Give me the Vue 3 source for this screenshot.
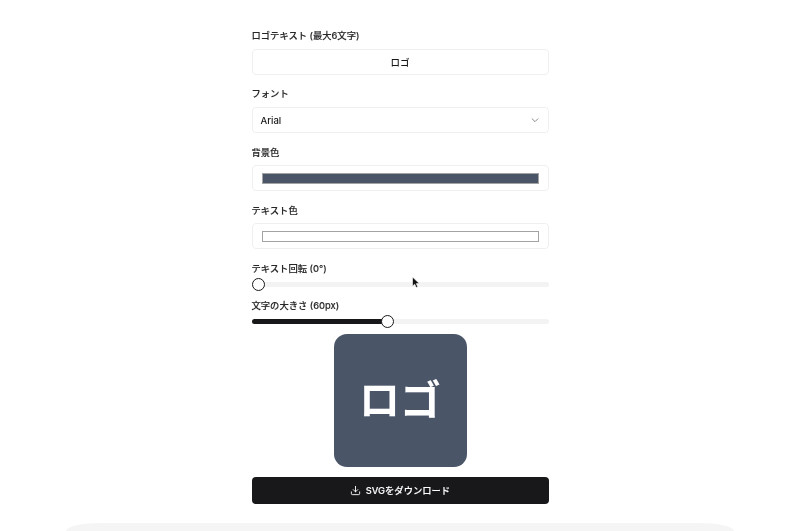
<script setup>
import { ref, computed } from "vue";

const logoText = ref("ロゴ");
const bgColor = "#4a5568";
const rotation = ref(0);
const fontSize = ref(60);

// thumb position on the track, range is about 10-120px
const sizeThumb = computed(() => `${fontSize.value * 0.763}%`);
</script>

<template>
  <div class="page">
    <main class="panel">
      <div class="field">
        <label>ロゴテキスト (最大6文字)</label>
        <div class="box text-box">{{ logoText }}</div>
      </div>
      <div class="field">
        <label>フォント</label>
        <div class="box select-box">
          <span>Arial</span>
          <svg width="10" height="10" viewBox="0 0 24 24" fill="none" stroke="#8a8a8a" stroke-width="2.4" stroke-linecap="round" stroke-linejoin="round">
            <path d="m5 9 7 7 7-7" />
          </svg>
        </div>
      </div>
      <div class="field">
        <label>背景色</label>
        <div class="box color-box">
          <div class="swatch" :style="{ background: bgColor }"></div>
        </div>
      </div>
      <div class="field">
        <label>テキスト色</label>
        <div class="box color-box">
          <div class="swatch" style="background: #ffffff"></div>
        </div>
      </div>
      <div class="slider-field">
        <label>テキスト回転 ({{ rotation }}°)</label>
        <div class="slider">
          <div class="track"></div>
          <div class="thumb thumb-start"></div>
          <svg class="cursor" width="10" height="13" viewBox="0 0 10 13">
            <path d="M1.5 1v9.2l2.2-2 1.5 3.4 1.6-.7-1.5-3.3h3z" fill="#111" stroke="#fff" stroke-width=".6" />
          </svg>
        </div>
      </div>
      <div class="slider-field second">
        <label>文字の大きさ ({{ fontSize }}px)</label>
        <div class="slider">
          <div class="track">
            <div class="fill" :style="{ width: sizeThumb }"></div>
          </div>
          <div class="thumb" :style="{ left: sizeThumb }"></div>
        </div>
      </div>
      <div class="preview" :style="{ background: bgColor }">
        <span>{{ logoText }}</span>
      </div>
      <button class="download">
        <svg width="11" height="11" viewBox="0 0 24 24" fill="none" stroke="#fff" stroke-width="2" stroke-linecap="round" stroke-linejoin="round">
          <path d="M21 15v4a2 2 0 0 1-2 2H5a2 2 0 0 1-2-2v-4" />
          <path d="m7 10 5 5 5-5" />
          <path d="M12 15V3" />
        </svg>
        SVGをダウンロード
      </button>
    </main>
    <div class="next-card"></div>
  </div>
</template>

<style>
html,
body {
  margin: 0;
  background: #fff;
  overflow: hidden;
}
</style>

<style scoped>
.page {
  height: 531px;
  overflow: hidden;
  font-family: Inter, "Noto Sans CJK JP", sans-serif;
  color: #18181b;
  will-change: transform;
}
.panel {
  width: 297px;
  margin: 0 auto;
  padding-top: 29px;
}
.field {
  display: flex;
  flex-direction: column;
  gap: 7px;
  margin-bottom: 12px;
}
label {
  display: block;
  height: 13px;
  font-size: 9.3px;
  line-height: 15px;
  font-weight: 500;
  color: #27272a;
  -webkit-text-stroke: 0.12px #27272a;
}
.field:nth-child(-n + 2) label {
  line-height: 14px;
}
.box {
  box-sizing: border-box;
  height: 26px;
  border: 1px solid #efefef;
  border-radius: 4px;
  font-size: 9.5px;
  font-weight: 500;
}
.text-box {
  display: flex;
  align-items: center;
  justify-content: center;
}
.select-box {
  display: flex;
  align-items: center;
  justify-content: space-between;
  padding: 0 8px;
}
.color-box {
  display: flex;
  align-items: center;
  padding: 0 9px;
}
.swatch {
  flex: 1;
  height: 9px;
  border: 1px solid #a3a3a3;
}
.slider-field {
  margin-top: 0.5px;
}
.slider-field.second {
  margin-top: 6.5px;
}
.slider {
  position: relative;
  height: 14px;
  margin-top: 3.5px;
  display: flex;
  align-items: center;
}
.second .slider {
  margin-top: 3px;
}
.track {
  flex: 1;
  height: 5px;
  border-radius: 3px;
  background: #f3f3f3;
  overflow: hidden;
}
.fill {
  height: 100%;
  background: #18181b;
}
.thumb {
  position: absolute;
  top: 0.5px;
  box-sizing: border-box;
  width: 13px;
  height: 13px;
  margin-left: -6.5px;
  border: 1.7px solid #18181b;
  border-radius: 50%;
  background: #fff;
}
.thumb-start {
  left: 6.5px;
}
.cursor {
  position: absolute;
  left: 159px;
  top: -2px;
}
.preview {
  width: 133px;
  height: 132.5px;
  margin: 6px auto 0;
  border-radius: 13px;
  display: flex;
  align-items: center;
  justify-content: center;
  color: #fff;
  font-size: 41px;
  font-weight: 700;
  line-height: 1;
}
.download {
  width: 100%;
  height: 27px;
  margin-top: 10px;
  display: flex;
  align-items: center;
  justify-content: center;
  gap: 5px;
  border: 0;
  border-radius: 4px;
  background: #18181b;
  color: #fff;
  font-family: inherit;
  font-size: 9.3px;
  font-weight: 500;
  -webkit-text-stroke: 0.12px #fff;
}
.next-card {
  width: 668px;
  height: 40px;
  margin: 19.5px auto 0;
  border-radius: 36px 36px 0 0 / 8px 8px 0 0;
  background: #f5f5f5;
}
</style>
